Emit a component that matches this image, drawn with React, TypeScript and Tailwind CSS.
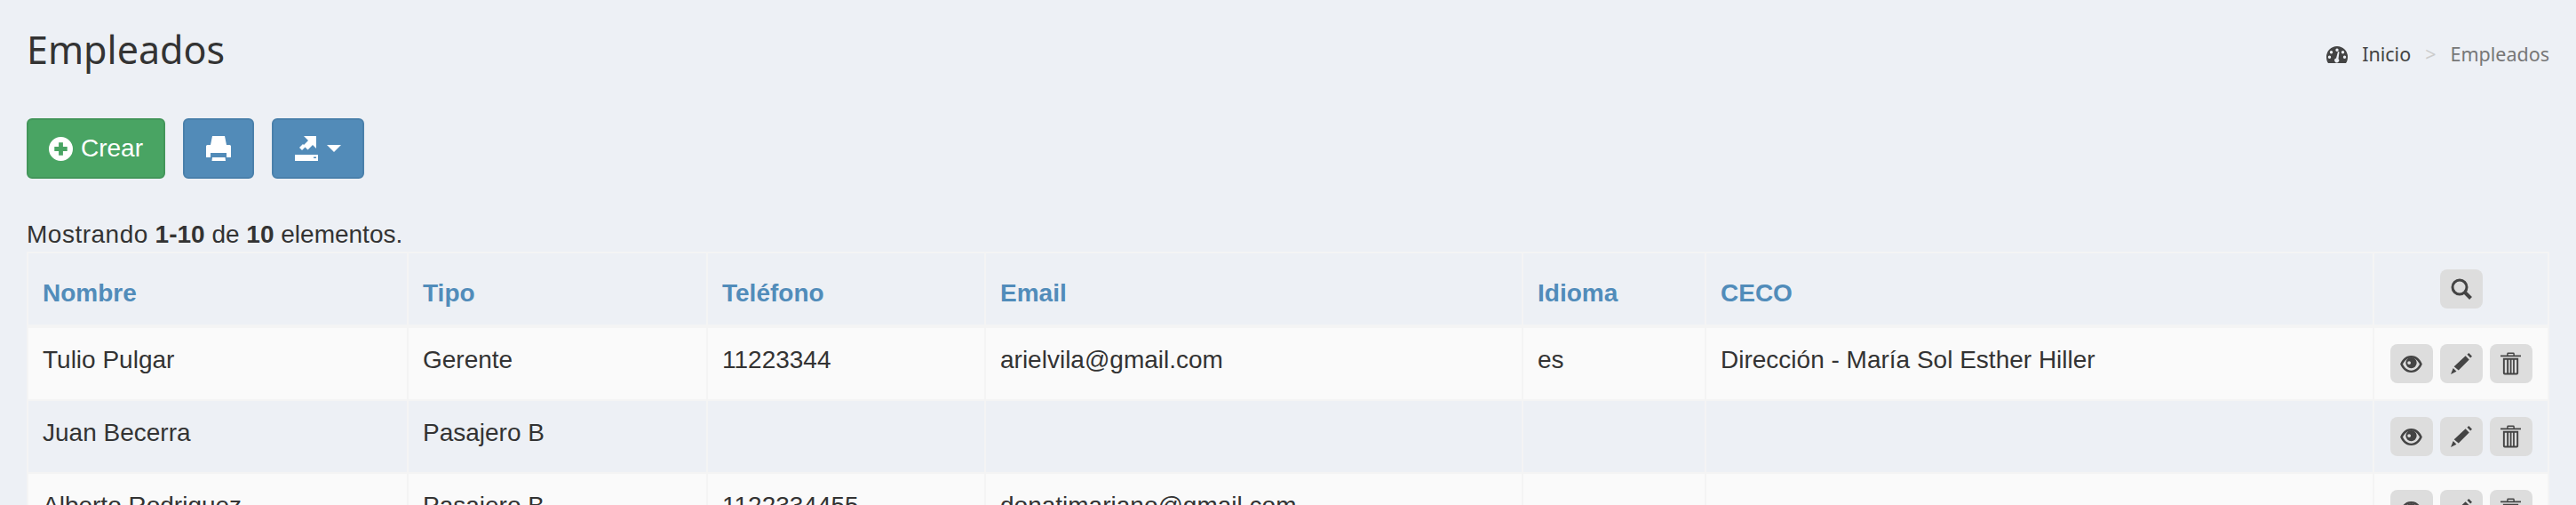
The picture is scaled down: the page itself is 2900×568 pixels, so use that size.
import React from 'react';

// Icons drawn to match the glyphs in the reference
const PlusIcon = () => (
  <svg viewBox="0 0 28 28" className="w-[27px] h-[27px] fill-current">
    <path fillRule="evenodd" d="M14 0a14 14 0 1 1 0 28a14 14 0 0 1 0-28zM11.500 6.500v5h-5v5h5v5h5v-5h5v-5h-5v-5z" />
  </svg>
);

const PrintIcon = () => (
  <svg viewBox="0 0 28 28" className="w-[28px] h-[28px] fill-current">
    <path d="M7 0h14l2 10H5zM1.500 10h25a1.500 1.500 0 0 1 1.500 1.500V24h-5v-5H5v5H0V11.500A1.500 1.500 0 0 1 1.500 10zM7 24h14.500l.5 4H6.500z" />
  </svg>
);

const ExportIcon = () => (
  <svg viewBox="0 0 26 28" className="w-[26px] h-[28px] fill-current">
    <path d="M10 0H24V14L20 10 14.500 15.500 9.500 10.500 15 5z" />
    <path d="M5 13L9 9 12 12 8 16z" />
    <path fillRule="evenodd" d="M0 21H26V28H0zM21 23.500V25H24V23.500z" />
  </svg>
);

const EyeIcon = () => (
  <svg viewBox="0 0 26 20" className="w-[25px] h-[19px] fill-current">
    <path fillRule="evenodd" d="M13 0C20 0 24 5 26 10C24 15 20 20 13 20C6 20 2 15 0 10C2 5 6 0 13 0zM3 10C5 14 8 17.500 13 17.500C18 17.500 21 14 23 10C21 6 18 2.500 13 2.500C8 2.500 5 6 3 10z" />
    <path fillRule="evenodd" d="M13 2a6.500 6.500 0 1 1 0 13a6.500 6.500 0 0 1 0-13zM10.500 6.500a2 2 0 1 0 0 4a2 2 0 0 0 0-4z" />
  </svg>
);

const PencilIcon = () => (
  <svg viewBox="0 0 26 26" className="w-[24px] h-[24px] fill-current">
    <path d="M22 0l4 4-2 2-4-4zM18 3.500l4.500 4.500L9.500 21l-5.500-4.500zM3 18.500l4 4L0 26z" />
  </svg>
);

const TrashIcon = () => (
  <svg viewBox="0 0 24 26" className="w-[23px] h-[26px] fill-current">
    <path fillRule="evenodd" d="M9 0h6a1.500 1.500 0 0 1 1.500 1.500V3H24v2H0V3h7.500V1.500A1.500 1.500 0 0 1 9 0zM9 1.500V3h6V1.500zM3 6.500h18V24a2 2 0 0 1-2 2H5a2 2 0 0 1-2-2zM5 8.500V24h2.500V8.500zM9.500 8.500V24h1.700V8.500zM13 8.500V24h1.700V8.500zM16.500 8.500V24H19V8.500z" />
  </svg>
);

const SearchIcon = () => (
  <svg viewBox="0 0 24 24" className="w-[24px] h-[24px] fill-none stroke-current">
    <circle cx="10" cy="10" r="8" strokeWidth="3" />
    <path d="M15.500 15.500L22.500 22.500" strokeWidth="4" />
  </svg>
);

const GaugeIcon = () => (
  <svg viewBox="0 0 24 19" className="w-[24px] h-[19px] fill-current">
    <path fillRule="evenodd" d="M12 0a12 12 0 0 1 12 12c0 2.500-.5 5-2 7H2C.5 17 0 14.500 0 12A12 12 0 0 1 12 0zM12 2.500a1.700 1.700 0 1 0 0 3.400a1.700 1.700 0 0 0 0-3.400zM5.500 5a1.700 1.700 0 1 0 0 3.400a1.700 1.700 0 0 0 0-3.400zM18.500 5a1.700 1.700 0 1 0 0 3.400a1.700 1.700 0 0 0 0-3.400zM3.500 10.500a1.700 1.700 0 1 0 0 3.400a1.700 1.700 0 0 0 0-3.400zM20.500 10.500a1.700 1.700 0 1 0 0 3.400a1.700 1.700 0 0 0 0-3.400zM13 6l-2 7.500a2.500 2.500 0 1 0 2.500.7L14.500 6.500z" />
  </svg>
);

const rows = [
  { nombre: 'Tulio Pulgar', tipo: 'Gerente', telefono: '11223344', email: 'arielvila@gmail.com', idioma: 'es', ceco: 'Dirección - María Sol Esther Hiller' },
  { nombre: 'Juan Becerra', tipo: 'Pasajero B', telefono: '', email: '', idioma: '', ceco: '' },
  { nombre: 'Alberto Rodriguez', tipo: 'Pasajero B', telefono: '1122334455', email: 'donatimariano@gmail.com', idioma: '', ceco: '' },
];

const headers = [
  { label: 'Nombre', width: 'w-[428px]' },
  { label: 'Tipo', width: 'w-[337px]' },
  { label: 'Teléfono', width: 'w-[313px]' },
  { label: 'Email', width: 'w-[605px]' },
  { label: 'Idioma', width: 'w-[206px]' },
  { label: 'CECO', width: 'w-[752px]' },
];

const ActionButton: React.FC<{ children: React.ReactNode }> = ({ children }) => (
  <button className="w-[48px] h-[44px] rounded-lg bg-[#dddddd] text-[#444444] flex items-center justify-center">
    {children}
  </button>
);

const Cell: React.FC<{ children?: React.ReactNode }> = ({ children }) => (
  <td className="border-2 border-[#f4f4f4] px-[16px] pt-[16px] align-top">{children}</td>
);

export default function App() {
  return (
    <div className="h-[568px] overflow-hidden bg-[#edf0f5] px-[30px] text-[#333333] font-['Liberation_Sans',sans-serif] text-[28px] leading-[40px]">
      <div className="flex items-start justify-between pt-[26px] h-[133px]">
        <h1 className="font-['Noto_Sans',sans-serif] font-normal text-[43px] leading-[60px] text-[#333333]">Empleados</h1>
        <div className="flex items-center font-['Noto_Sans',sans-serif] text-[21.5px] leading-[30px] mt-[20px]">
          <span className="text-[#444444] mr-[16px]"><GaugeIcon /></span>
          <span className="text-[#444444]">Inicio</span>
          <span className="text-[#cccccc] mx-[16px]">&gt;</span>
          <span className="text-[#777777]">Empleados</span>
        </div>
      </div>

      <div className="flex gap-[20px] h-[68px]">
        <button className="w-[156px] h-[68px] rounded-[6px] border-2 border-[#43965a] bg-[#49a463] text-white flex items-center justify-center gap-[9px] text-[28px]">
          <PlusIcon />
          <span>Crear</span>
        </button>
        <button className="w-[80px] h-[68px] rounded-[6px] border-2 border-[#4a80ab] bg-[#528bb8] text-white flex items-center justify-center">
          <PrintIcon />
        </button>
        <button className="w-[104px] h-[68px] rounded-[6px] border-2 border-[#4a80ab] bg-[#528bb8] text-white flex items-center justify-center gap-[10px]">
          <ExportIcon />
          <span className="w-0 h-0 border-x-[8px] border-x-transparent border-t-[8px] border-t-white" />
        </button>
      </div>

      <div className="mt-[43px] h-[39px]">
        <span className="tracking-[0.5px]">Mostrando</span> <b>1-10</b> de <b>10</b> elementos.
      </div>

      <table className="table-fixed w-full border-collapse">
        <thead>
          <tr>
            {headers.map(h => (
              <th key={h.label} className={`${h.width} border-2 border-b-4 border-[#f4f4f4] px-[16px] pb-[15px] align-bottom text-left font-bold text-[#518cba]`}>
                {h.label}
              </th>
            ))}
            <th className="border-2 border-b-4 border-[#f4f4f4] py-[18px] align-middle">
              <div className="flex justify-center">
                <ActionButton><SearchIcon /></ActionButton>
              </div>
            </th>
          </tr>
        </thead>
        <tbody>
          {rows.map((r, i) => (
            <tr key={r.nombre} className={i % 2 === 0 ? 'bg-[#fafafa]' : ''}>
              <Cell>{r.nombre}</Cell>
              <Cell>{r.tipo}</Cell>
              <Cell>{r.telefono}</Cell>
              <Cell>{r.email}</Cell>
              <Cell>{r.idioma}</Cell>
              <Cell>{r.ceco}</Cell>
              <td className="border-2 border-[#f4f4f4] py-[18px] align-top">
                <div className="flex justify-center gap-[8px]">
                  <ActionButton><EyeIcon /></ActionButton>
                  <ActionButton><PencilIcon /></ActionButton>
                  <ActionButton><TrashIcon /></ActionButton>
                </div>
              </td>
            </tr>
          ))}
        </tbody>
      </table>
    </div>
  );
}
